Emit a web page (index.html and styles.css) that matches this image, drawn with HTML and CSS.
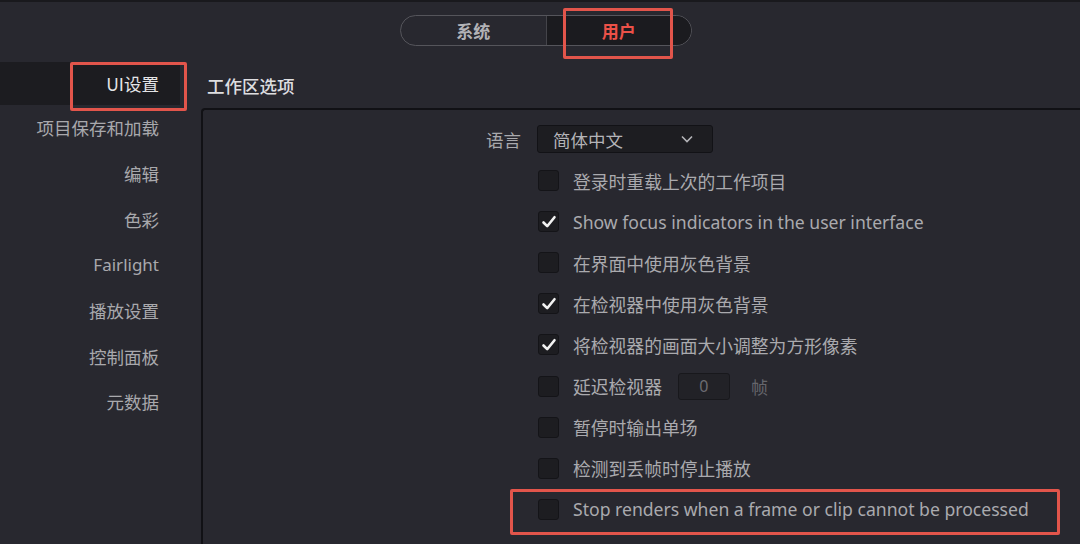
FILE: index.html
```html
<!DOCTYPE html>
<html lang="zh">
<head>
<meta charset="utf-8">
<link rel="stylesheet" href="styles.css">
</head>
<body>
<div class="screen">
  <div class="topbar">
    <div class="segmented">
      <div class="seg seg-left">系统</div>
      <div class="seg seg-right active">用户</div>
    </div>
  </div>
  <div class="main">
    <nav class="sidebar">
      <div class="nav-item current">UI设置</div>
      <div class="nav-item">项目保存和加载</div>
      <div class="nav-item">编辑</div>
      <div class="nav-item">色彩</div>
      <div class="nav-item latin">Fairlight</div>
      <div class="nav-item">播放设置</div>
      <div class="nav-item">控制面板</div>
      <div class="nav-item">元数据</div>
    </nav>
    <section class="content">
      <h2 class="section-title">工作区选项</h2>
      <div class="panel">
        <div class="form">
          <div class="form-row lang-row">
            <div class="label">语言</div>
            <div class="dropdown">
              <span>简体中文</span>
              <svg class="chevron" width="12" height="8" viewBox="0 0 12 8"><path d="M1 1.5 L6 6.5 L11 1.5" fill="none" stroke="#b4b4b8" stroke-width="1.6"/></svg>
            </div>
          </div>
          <div class="check-row"><span class="box"></span><span class="text">登录时重载上次的工作项目</span></div>
          <div class="check-row"><span class="box checked"><svg width="16" height="14" viewBox="0 0 16 14"><path d="M2.5 7.5 L6.2 11.2 L13.5 2.2" fill="none" stroke="#f2f2f2" stroke-width="2.6" stroke-linecap="round" stroke-linejoin="round"/></svg></span><span class="text latin">Show focus indicators in the user interface</span></div>
          <div class="check-row"><span class="box"></span><span class="text">在界面中使用灰色背景</span></div>
          <div class="check-row"><span class="box checked"><svg width="16" height="14" viewBox="0 0 16 14"><path d="M2.5 7.5 L6.2 11.2 L13.5 2.2" fill="none" stroke="#f2f2f2" stroke-width="2.6" stroke-linecap="round" stroke-linejoin="round"/></svg></span><span class="text">在检视器中使用灰色背景</span></div>
          <div class="check-row"><span class="box checked"><svg width="16" height="14" viewBox="0 0 16 14"><path d="M2.5 7.5 L6.2 11.2 L13.5 2.2" fill="none" stroke="#f2f2f2" stroke-width="2.6" stroke-linecap="round" stroke-linejoin="round"/></svg></span><span class="text">将检视器的画面大小调整为方形像素</span></div>
          <div class="check-row"><span class="box"></span><span class="text">延迟检视器</span><span class="num-input">0</span><span class="unit">帧</span></div>
          <div class="check-row"><span class="box"></span><span class="text">暂停时输出单场</span></div>
          <div class="check-row"><span class="box"></span><span class="text">检测到丢帧时停止播放</span></div>
          <div class="check-row marked"><span class="box"></span><span class="text latin">Stop renders when a frame or clip cannot be processed</span></div>
        </div>
      </div>
    </section>
  </div>
</div>
</body>
</html>
```
FILE: styles.css
```css
* { box-sizing: border-box; }
html, body { margin: 0; padding: 0; }
body {
  background: #28282f;
  font-family: "Noto Sans", "Noto Sans CJK SC", sans-serif;
  color: #ababaf;
  width: 1080px;
  height: 544px;
  overflow: hidden;
}
.screen {
  width: 1080px;
  height: 544px;
  border-top: 2px solid #19191d;
  display: flex;
  flex-direction: column;
}
.topbar {
  height: 60px;
  display: flex;
  justify-content: center;
  padding-left: 12px;
  padding-top: 13px;
}
.segmented {
  width: 292px;
  height: 31px;
  border: 1px solid #55555b;
  border-radius: 16px;
  display: flex;
  position: relative;
}
.seg {
  flex: 1;
  display: flex;
  align-items: center;
  justify-content: center;
  font-family: "Noto Sans CJK SC", sans-serif;
  font-size: 17px;
  font-weight: 700;
  position: relative;
}
.seg-left { color: #b2b2b6; border-right: 1px solid #44444a; border-radius: 15px 0 0 15px; }
.seg-right { background: #1b1b1f; color: #ec5148; border-radius: 0 15px 15px 0; }
.seg-right::after {
  content: "";
  position: absolute;
  left: 16px;
  top: -8px;
  width: 104px;
  height: 45px;
  border: 3px solid #e2554b;
  border-radius: 2px;
}
.main {
  flex: 1;
  display: flex;
}
.sidebar {
  width: 180px;
  display: flex;
  flex-direction: column;
}
.nav-item {
  height: 45.7px;
  display: flex;
  align-items: center;
  justify-content: flex-end;
  padding-right: 21px;
  font-family: "Noto Sans CJK SC", sans-serif;
  font-size: 17.5px;
  color: #a9a9ad;
  flex: none;
}
.nav-item.latin { font-family: "Noto Sans", sans-serif; font-size: 17px; }
.nav-item.current {
  height: 43px;
  background: #1c1c20;
  color: #e4e4e6;
  position: relative;
}
.nav-item.current::after {
  content: "";
  position: absolute;
  left: 70px;
  top: 0;
  width: 111px;
  height: 43px;
  border: 3px solid #e2554b;
  border-radius: 2px;
}
.content {
  flex: 1;
  display: flex;
  flex-direction: column;
  padding-left: 21px;
}
.section-title {
  margin: 0;
  height: 46px;
  display: flex;
  align-items: center;
  padding-left: 6px;
  font-family: "Noto Sans CJK SC", sans-serif;
  font-size: 17.5px;
  font-weight: 500;
  color: #dedee0;
}
.panel {
  flex: 1;
  border-top: 2px solid #111115;
  border-left: 2px solid #111115;
  border-top-left-radius: 4px;
  background: #28282f;
}
.form {
  padding-top: 15px;
  display: flex;
  flex-direction: column;
  padding-left: 334px;
}
.form-row {
  display: flex;
  align-items: center;
  height: 28px;
  margin-bottom: 7px;
  position: relative;
}
.label {
  position: absolute;
  right: calc(100% + 16px);
  white-space: nowrap;
  font-family: "Noto Sans CJK SC", sans-serif;
  font-size: 17.5px;
  color: #a9a9ad;
}
.dropdown {
  width: 176px;
  height: 28px;
  background: #1d1d21;
  border: 1px solid #121216;
  border-radius: 3px;
  display: flex;
  align-items: center;
  justify-content: space-between;
  padding: 0 19px 0 15px;
  font-family: "Noto Sans CJK SC", sans-serif;
  font-size: 17.5px;
  color: #b4b4b8;
}
.check-row {
  height: 41.1px;
  display: flex;
  align-items: center;
  position: relative;
  margin-left: 1px;
}
.box {
  width: 21px;
  height: 21px;
  background: #1d1d21;
  border: 1px solid #141418;
  border-radius: 3px;
  margin-right: 14px;
  display: flex;
  align-items: center;
  justify-content: center;
  flex: none;
}
.text {
  font-family: "Noto Sans CJK SC", sans-serif;
  font-size: 17.8px;
  color: #aaaaae;
  white-space: nowrap;
}
.text.latin { font-family: "Noto Sans", sans-serif; font-size: 17.6px; }
.num-input {
  width: 52px;
  height: 27px;
  margin-left: 16px;
  background: #222227;
  border: 1px solid #18181c;
  border-radius: 3px;
  display: flex;
  align-items: center;
  justify-content: center;
  font-family: "Noto Sans", sans-serif;
  font-size: 16px;
  color: #6c6c72;
}
.unit {
  margin-left: 21px;
  font-family: "Noto Sans CJK SC", sans-serif;
  font-size: 17px;
  color: #66666c;
}
.check-row.marked::after {
  content: "";
  position: absolute;
  left: -28px;
  top: 0;
  width: 544px;
  height: 40px;
  border: 3px solid #e2554b;
  border-radius: 2px;
}
```
